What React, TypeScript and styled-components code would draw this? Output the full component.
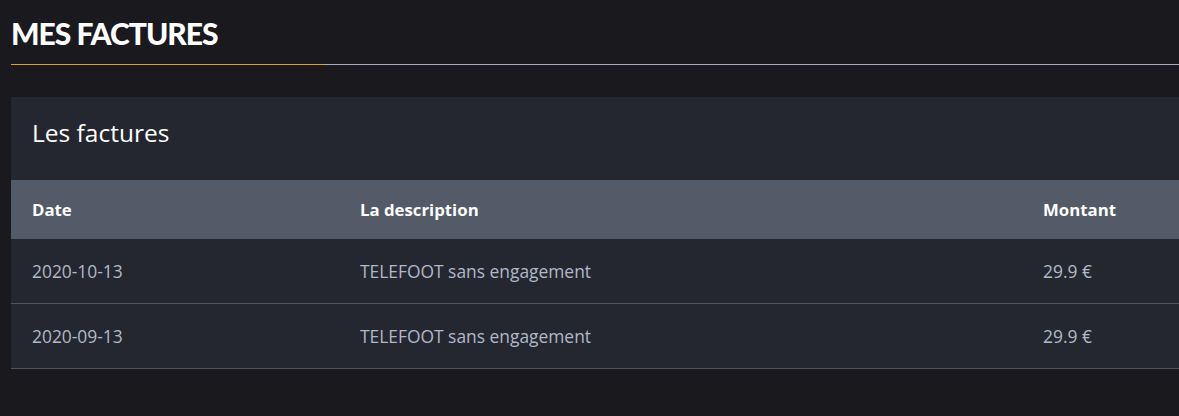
import React from "react";
import styled, { createGlobalStyle } from "styled-components";

const Global = createGlobalStyle`
  html, body { margin: 0; padding: 0; background: #19191e; }
  body { font-family: "Open Sans", "Noto Sans", sans-serif; overflow: hidden; }
`;

const Page = styled.div`
  padding: 15px 0 0 11px;
`;

const Title = styled.h1`
  margin: 0;
  font-family: "Lato", "Liberation Sans", sans-serif;
  font-weight: 900;
  font-size: 30px;
  line-height: 36px;
  color: #ffffff;
  letter-spacing: -1px;
`;

const Rule = styled.div`
  margin-top: 13px;
  height: 1px;
  background: linear-gradient(to right, #e0a126 0, #e0a126 313px, #a7abbb 313px, #a7abbb 100%);
`;

const Panel = styled.section`
  margin-top: 32px;
  background: #24272f;
`;

const PanelTitle = styled.h2`
  margin: 0;
  padding: 18px 21px 0;
  height: 65px;
  font-weight: 400;
  font-size: 24.5px;
  line-height: 36px;
  color: #ffffff;
`;

const Row = styled.div<{ $head?: boolean }>`
  display: grid;
  grid-template-columns: 328px 683px 1fr;
  height: ${(p) => (p.$head ? "59px" : "65px")};
  align-items: center;
  background: ${(p) => (p.$head ? "#535a68" : "transparent")};
  border-bottom: ${(p) => (p.$head ? "none" : "1px solid #4f5461")};
  box-sizing: border-box;
`;

const Cell = styled.div<{ $head?: boolean }>`
  padding: 0 21px;
  font-size: ${(p) => (p.$head ? "16.8px" : "17.4px")};
  font-weight: ${(p) => (p.$head ? 700 : 400)};
  color: ${(p) => (p.$head ? "#ffffff" : "#b1b9c8")};
  white-space: nowrap;
`;

const rows = [
  { date: "2020-10-13", desc: "TELEFOOT sans engagement", amount: "29.9 €" },
  { date: "2020-09-13", desc: "TELEFOOT sans engagement", amount: "29.9 €" },
];

export default function App() {
  return (
    <>
      <Global />
      <Page>
        <Title>MES FACTURES</Title>
        <Rule />
        <Panel>
          <PanelTitle>Les factures</PanelTitle>
          <Row $head>
            <Cell $head>Date</Cell>
            <Cell $head>La description</Cell>
            <Cell $head>Montant</Cell>
          </Row>
          {rows.map((r, i) => (
            <Row key={i}>
              <Cell>{r.date}</Cell>
              <Cell>{r.desc}</Cell>
              <Cell>{r.amount}</Cell>
            </Row>
          ))}
        </Panel>
      </Page>
    </>
  );
}
